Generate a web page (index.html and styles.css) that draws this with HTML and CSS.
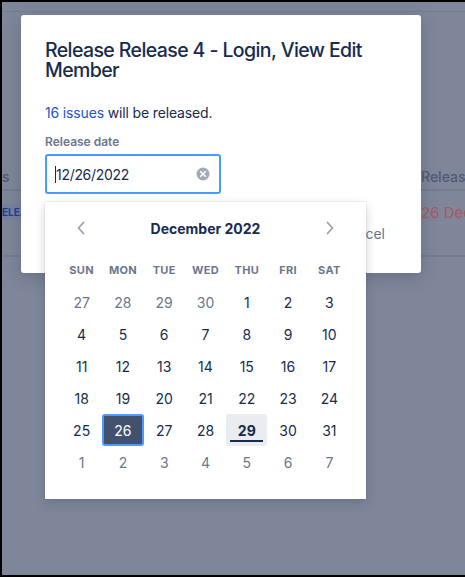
FILE: index.html
```html
<!DOCTYPE html>
<html>
<head>
  <meta charset="utf-8">
  <meta name="viewport" content="width=device-width">
  <title>Release</title>
  <link rel="stylesheet" href="styles.css">
</head>
<body>
  <div class="screen">
    <!-- page behind the dialog -->
    <div class="backdrop">
      <div class="top-line"></div>
      <div class="bg-row bg-head">
        <span class="bg-left">s</span>
        <span class="bg-right">Release</span>
      </div>
      <div class="bg-row bg-body">
        <span class="bg-left"><span class="bg-tag">ELEA</span></span>
        <span class="bg-right bg-red">26 Dec</span>
      </div>
    </div>

    <div class="modal">
      <h1 class="modal-title">Release Release 4 - Login, View Edit Member</h1>
      <p class="summary"><a class="issues-link">16 issues</a> will be released.</p>
      <div class="field-label">Release date</div>
      <div class="date-input">
        <span class="caret"></span>
        <span class="date-value">12/26/2022</span>
        <svg class="clear-icon" width="14" height="14" viewBox="0 0 14 14">
          <circle cx="7" cy="7" r="6.5" fill="#a5a9b5"/>
          <path d="M4.7 4.7l4.6 4.6M9.3 4.7l-4.6 4.6" stroke="#fff" stroke-width="1.6" stroke-linecap="round"/>
        </svg>
      </div>
      <div class="modal-footer"><span class="cancel">Cancel</span></div>

      <div class="calendar">
        <div class="cal-head">
          <svg width="10" height="14" viewBox="0 0 10 14"><path d="M7.5 1.5L2.5 7l5 5.5" fill="none" stroke="#9aa0ae" stroke-width="1.8" stroke-linecap="round" stroke-linejoin="round"/></svg>
          <span class="cal-month">December 2022</span>
          <svg width="10" height="14" viewBox="0 0 10 14"><path d="M2.5 1.5L7.5 7l-5 5.5" fill="none" stroke="#9aa0ae" stroke-width="1.8" stroke-linecap="round" stroke-linejoin="round"/></svg>
        </div>
        <div class="cal-grid">
          <div class="dow">SUN</div><div class="dow">MON</div><div class="dow">TUE</div><div class="dow">WED</div><div class="dow">THU</div><div class="dow">FRI</div><div class="dow">SAT</div>
          <div class="day muted">27</div><div class="day muted">28</div><div class="day muted">29</div><div class="day muted">30</div><div class="day">1</div><div class="day">2</div><div class="day">3</div>
          <div class="day">4</div><div class="day">5</div><div class="day">6</div><div class="day">7</div><div class="day">8</div><div class="day">9</div><div class="day">10</div>
          <div class="day">11</div><div class="day">12</div><div class="day">13</div><div class="day">14</div><div class="day">15</div><div class="day">16</div><div class="day">17</div>
          <div class="day">18</div><div class="day">19</div><div class="day">20</div><div class="day">21</div><div class="day">22</div><div class="day">23</div><div class="day">24</div>
          <div class="day">25</div><div class="day selected">26</div><div class="day">27</div><div class="day">28</div><div class="day today">29</div><div class="day">30</div><div class="day">31</div>
          <div class="day muted">1</div><div class="day muted">2</div><div class="day muted">3</div><div class="day muted">4</div><div class="day muted">5</div><div class="day muted">6</div><div class="day muted">7</div>
        </div>
      </div>
    </div>
  </div>
</body>
</html>
```

FILE: styles.css
```css
:root {
  --ink: #172b4d;
  --muted: #6b778c;
}

* {
  box-sizing: border-box;
}

html, body {
  margin: 0;
  height: 100%;
}

body {
  font-family: Inter, "Liberation Sans", sans-serif;
  background: #000;
  overflow: hidden;
}

.screen {
  position: relative;
  height: 573px;
  margin: 2px 0 0 2px;
  background: #7f8699;
  overflow: hidden;
}

.top-line {
  height: 10px;
  border-bottom: 1px solid #747b8f;
}

.bg-row {
  display: flex;
  justify-content: space-between;
  font-size: 14px;
  color: #4d5a77;
  white-space: nowrap;
}

.bg-head {
  height: 179px;
  padding-top: 156px;
  border-bottom: 2px solid #747b8f;
  font-weight: 500;
}

.bg-body {
  height: 66px;
  padding-top: 12px;
  border-bottom: 2px solid #747b8f;
}

.bg-right {
  width: 44px;
}

.bg-left {
  width: 19px;
  overflow: hidden;
}

.bg-tag {
  display: block;
  margin-top: 1px;
  font-size: 10px;
  line-height: 16px;
  font-weight: 700;
  color: #1d3f8f;
  background: #75829f;
}

.bg-red {
  color: #a55a5f;
  font-size: 15px;
}

.modal {
  position: absolute;
  left: 19px;
  top: 13px;
  width: 400px;
  height: 258px;
  padding: 25px 24px 0;
  background: #fff;
  border-radius: 3px;
  box-shadow: 0 4px 16px rgba(60, 70, 95, 0.35);
}

.modal-title {
  margin: 0;
  font-size: 19.5px;
  font-weight: 500;
  line-height: 20px;
  letter-spacing: -0.6px;
  color: var(--ink);
}

.summary {
  margin: 23px 0 0;
  font-size: 14px;
  line-height: 20px;
  letter-spacing: -0.15px;
  color: var(--ink);
}

.issues-link {
  color: #1f55c9;
}

.field-label {
  margin-top: 11px;
  font-size: 12px;
  line-height: 16px;
  font-weight: 600;
  color: var(--muted);
}

.date-input {
  display: flex;
  align-items: center;
  width: 176px;
  height: 40px;
  margin-top: 4px;
  padding: 0 9px 0 8px;
  border: 2px solid #4c9aff;
  border-radius: 3px;
  font-size: 14px;
  letter-spacing: -0.3px;
  color: var(--ink);
}

.caret {
  width: 1px;
  height: 17px;
  background: var(--ink);
}

.date-value {
  flex: 1;
}

.modal-footer {
  display: flex;
  justify-content: flex-end;
  padding: 30px 12px 0 0;
  font-size: 14px;
  line-height: 20px;
  color: var(--muted);
}

.calendar {
  position: absolute;
  left: 24px;
  top: 187px;
  width: 321px;
  height: 297px;
  padding: 16px 16px 0;
  background: #fff;
  box-shadow: 0 4px 10px rgba(40, 50, 75, 0.22), 0 0 1px rgba(40, 50, 75, 0.3);
}

.cal-head {
  display: flex;
  align-items: center;
  justify-content: space-between;
  height: 20px;
  padding: 0 15px;
}

.cal-month {
  font-size: 14px;
  font-weight: 700;
  color: var(--ink);
}

.cal-grid {
  display: grid;
  grid-template-columns: repeat(7, 1fr);
  grid-auto-rows: 32px;
  margin-top: 16px;
  width: 289px;
}

.dow, .day {
  display: flex;
  align-items: center;
  justify-content: center;
}

.dow {
  font-size: 11px;
  font-weight: 700;
  letter-spacing: 0.3px;
  color: var(--muted);
}

.day {
  font-size: 14px;
  color: var(--ink);
  border-radius: 3px;
}

.day.muted {
  color: var(--muted);
}

.day.selected {
  background: #42526e;
  color: #fff;
  border: 2px solid #4c9aff;
}

.day.today {
  position: relative;
  background: #ebecf0;
  font-weight: 700;
}

.day.today::after {
  content: "";
  position: absolute;
  left: 4px;
  right: 4px;
  bottom: 4px;
  height: 2px;
  background: #172b4d;
}
```
